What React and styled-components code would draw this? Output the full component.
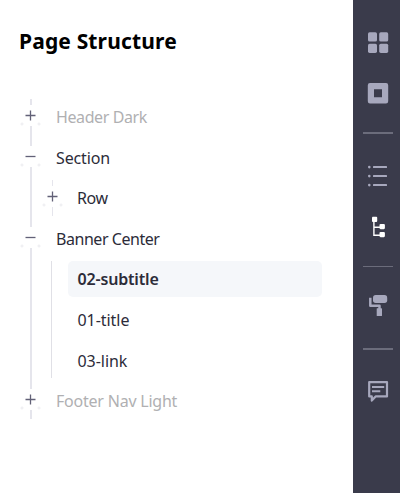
import React from 'react';
import styled, { createGlobalStyle } from 'styled-components';

const GlobalStyle = createGlobalStyle`
  * { box-sizing: border-box; }
  body { margin: 0; background: #fff; font-family: "Noto Sans", "Open Sans", sans-serif; }
`;

const Layout = styled.div`
  display: flex;
  width: 400px;
  height: 493px;
  overflow: hidden;
`;

const Panel = styled.main`
  flex: 1;
  padding: 25px 31px 0 20px;
`;

const Title = styled.h1`
  margin: 0 0 40px -1px;
  height: 32px;
  font-size: 21px;
  line-height: 32px;
  font-weight: 700;
  letter-spacing: 0.15px;
  color: #000;
  white-space: nowrap;
`;

const Tree = styled.div`
  display: flex;
  flex-direction: column;
`;

const Row = styled.div`
  display: flex;
  height: 40.6px;
`;

const Gutter = styled.div`
  display: flex;
  flex-direction: column;
  align-items: center;
  flex: none;
  width: 21px;
  padding-top: ${(p) => (p.$first ? 2 : 0)}px;
  padding-bottom: ${(p) => (p.$last ? 3 : 0)}px;
`;

const NestedGutter = styled(Gutter)`
  width: 22px;
`;

const Line = styled.span`
  flex: ${(p) => (p.$height ? `0 0 ${p.$height}px` : '1')};
  width: ${(p) => (p.$thin ? 1 : 2)}px;
  background: #e5e5ec;
`;

const Toggle = styled.button`
  flex: none;
  display: block;
  width: 21px;
  height: 21px;
  padding: 0;
  border: 0;
  background:
    radial-gradient(circle at 2px 19px, #f0f0f3 1.2px, transparent 1.8px),
    radial-gradient(circle at 19px 19px, #f0f0f3 1.2px, transparent 1.8px),
    #fff;

  svg { display: block; }
`;

const Label = styled.span`
  margin-left: ${(p) => (p.$nested ? 14 : 15)}px;
  font-size: 16px;
  line-height: 40.6px;
  letter-spacing: ${(p) => p.$spacing}px;
  color: ${(p) => (p.$muted ? '#b0b0b2' : '#2c2c39')};
  white-space: nowrap;
`;

const Children = styled.div`
  display: flex;
  flex-direction: column;
  flex: 1;
  margin: 2px 0 2.8px 10px;
  border-left: 1px solid #e0e0e6;
  padding-left: 16px;
`;

const Branch = styled.div`
  display: flex;
  height: 121.8px;
`;

const Leaf = styled.div`
  height: 36px;
  margin-bottom: 4.6px;
  padding-left: 9.5px;
  border-radius: 5px;
  background: ${(p) => (p.$active ? '#f5f7fa' : 'transparent')};
  color: #2c2c39;
  font-size: 16px;
  font-weight: ${(p) => (p.$active ? 600 : 400)};
  line-height: ${(p) => (p.$active ? 37.5 : 36)}px;
  letter-spacing: ${(p) => p.$spacing}px;
`;

const Sidebar = styled.nav`
  display: flex;
  flex-direction: column;
  align-items: center;
  flex: none;
  width: 47px;
  padding: 30px 7px 0 10px;
  background: #3a3b4b;
`;

const Tool = styled.button`
  flex: none;
  width: 26px;
  height: 26px;
  margin-bottom: ${(p) => p.$gap}px;
  padding: 0;
  border: 0;
  background: none;
  color: ${(p) => (p.$active ? '#fff' : '#a7a8bd')};

  svg { display: block; }
`;

const Divider = styled.hr`
  flex: none;
  width: 30px;
  height: 1.5px;
  margin: 0 0 ${(p) => p.$gap}px;
  border: 0;
  background: #6b6c7b;
`;

const ToggleIcon = ({ open }) => (
  <svg width="21" height="21" viewBox="0 0 21 21" stroke="#626177" strokeWidth="1.3">
    <path d={open ? 'M5.5 10.5H15.5' : 'M5.5 10.5H15.5M10.5 5.5V15.5'} />
  </svg>
);

const Icon = ({ children }) => (
  <svg width="26" height="26" viewBox="0 0 26 26" fill="currentColor">{children}</svg>
);

const Node = ({ label, open, muted, first, last, spacing }) => (
  <Row>
    <Gutter $first={first} $last={last}>
      <Line $height={first ? 6 : 8} />
      <Toggle aria-label={label}><ToggleIcon open={open} /></Toggle>
      <Line />
    </Gutter>
    <Label $muted={muted} $spacing={spacing}>{label}</Label>
  </Row>
);

export default function App() {
  return (
    <>
      <GlobalStyle />
      <Layout>
        <Panel>
          <Title>Page Structure</Title>
          <Tree>
            <Node label="Header Dark" muted first spacing={-0.4} />
            <Node label="Section" open spacing={-0.15} />
            <Row>
              <Gutter><Line /></Gutter>
              <NestedGutter $first $last>
                <Line $thin $height={6} />
                <Toggle aria-label="Row"><ToggleIcon /></Toggle>
                <Line $thin />
              </NestedGutter>
              <Label $nested $spacing={-0.4}>Row</Label>
            </Row>
            <Node label="Banner Center" open spacing={-0.45} />
            <Branch>
              <Gutter><Line /></Gutter>
              <Children>
                <Leaf $active $spacing={-0.17}>02-subtitle</Leaf>
                <Leaf $spacing={-0.05}>01-title</Leaf>
                <Leaf $spacing={-0.05}>03-link</Leaf>
              </Children>
            </Branch>
            <Node label="Footer Nav Light" muted last spacing={-0.22} />
          </Tree>
        </Panel>
        <Sidebar>
          <Tool $gap={24} aria-label="Blocks">
            <Icon>
              <rect x="3" y="2.3" width="9" height="9.2" rx="1.6" />
              <rect x="14.2" y="2.3" width="9" height="9.2" rx="1.6" />
              <rect x="3" y="13.7" width="9" height="9.2" rx="1.6" />
              <rect x="14.2" y="13.7" width="9" height="9.2" rx="1.6" />
            </Icon>
          </Tool>
          <Tool $gap={26} aria-label="Element">
            <Icon>
              <path fillRule="evenodd" d="M5 3H21Q23.2 3 23.2 5.2V21.2Q23.2 23.5 21 23.5H5Q2.8 23.5 2.8 21.2V5.2Q2.8 3 5 3ZM9 9.2V17.2H17V9.2Z" />
            </Icon>
          </Tool>
          <Divider $gap={29.5} />
          <Tool $gap={25} aria-label="List">
            <Icon>
              <rect x="8" y="3.1" width="14" height="2" rx="0.6" />
              <rect x="8" y="12.1" width="14" height="2" rx="0.6" />
              <rect x="8" y="21.1" width="14" height="2" rx="0.6" />
              <circle cx="4.3" cy="4.1" r="1.3" />
              <circle cx="4.3" cy="13.1" r="1.3" />
              <circle cx="4.3" cy="22.1" r="1.3" />
            </Icon>
          </Tool>
          <Tool $active $gap={25.5} aria-label="Page structure">
            <Icon>
              <rect x="7" y="2.8" width="5.2" height="5.1" rx="0.9" />
              <rect x="14.5" y="10" width="5.4" height="5.2" rx="1.1" />
              <rect x="14.5" y="18" width="5.4" height="5.2" rx="1.1" />
              <path d="M8.9 6V21.3H16M8.9 13.2H16" fill="none" stroke="currentColor" strokeWidth="1.4" />
            </Icon>
          </Tool>
          <Divider $gap={26} />
          <Tool $gap={29} aria-label="Theme">
            <Icon>
              <rect x="8" y="2" width="14.2" height="7.9" rx="2.7" />
              <path d="M5.3 4.8V12.7H14.5V16.5" fill="none" stroke="currentColor" strokeWidth="2.5" strokeLinejoin="round" />
              <rect x="11.7" y="15.3" width="5.3" height="7.6" rx="0.5" />
            </Icon>
          </Tool>
          <Divider $gap={29.5} />
          <Tool $gap={0} aria-label="Comments">
            <Icon>
              <path d="M4.2 3.1H22V17.4H10.6L6.8 21.6V17.4H4.2Z" fill="none" stroke="currentColor" strokeWidth="2.2" strokeLinejoin="round" />
              <path d="M7 8H19.2M7 12.3H15.3" stroke="currentColor" strokeWidth="2" />
            </Icon>
          </Tool>
        </Sidebar>
      </Layout>
    </>
  );
}
